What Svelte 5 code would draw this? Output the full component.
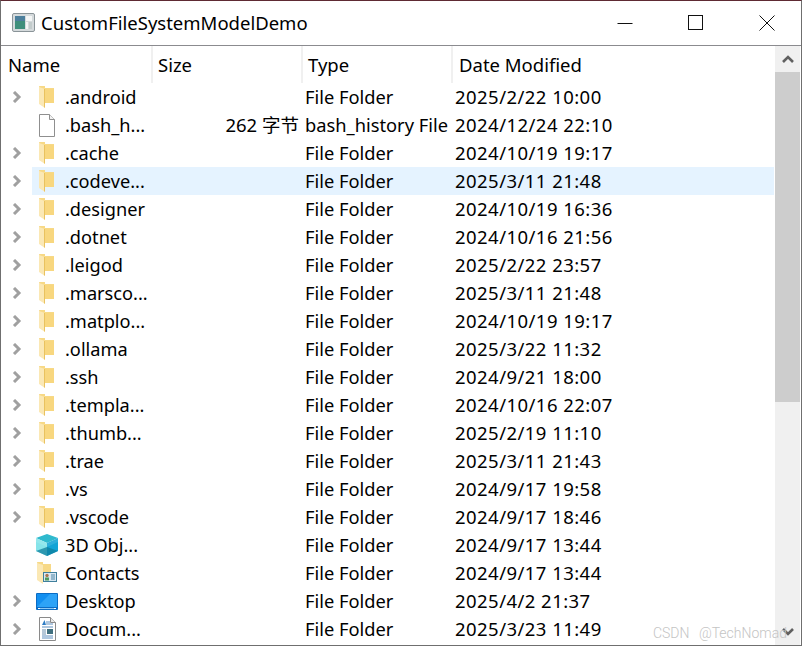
<script>
  const rows = [
    { name: '.android', type: 'File Folder', date: '2025/2/22 10:00', icon: 'folder', arrow: true },
    { name: '.bash_h...', size: '262 字节', type: 'bash_history File', date: '2024/12/24 22:10', icon: 'file', arrow: false },
    { name: '.cache', type: 'File Folder', date: '2024/10/19 19:17', icon: 'folder', arrow: true },
    { name: '.codeve...', type: 'File Folder', date: '2025/3/11 21:48', icon: 'folder', arrow: true, hover: true },
    { name: '.designer', type: 'File Folder', date: '2024/10/19 16:36', icon: 'folder', arrow: true },
    { name: '.dotnet', type: 'File Folder', date: '2024/10/16 21:56', icon: 'folder', arrow: true },
    { name: '.leigod', type: 'File Folder', date: '2025/2/22 23:57', icon: 'folder', arrow: true },
    { name: '.marsco...', type: 'File Folder', date: '2025/3/11 21:48', icon: 'folder', arrow: true },
    { name: '.matplo...', type: 'File Folder', date: '2024/10/19 19:17', icon: 'folder', arrow: true },
    { name: '.ollama', type: 'File Folder', date: '2025/3/22 11:32', icon: 'folder', arrow: true },
    { name: '.ssh', type: 'File Folder', date: '2024/9/21 18:00', icon: 'folder', arrow: true },
    { name: '.templa...', type: 'File Folder', date: '2024/10/16 22:07', icon: 'folder', arrow: true },
    { name: '.thumb...', type: 'File Folder', date: '2025/2/19 11:10', icon: 'folder', arrow: true },
    { name: '.trae', type: 'File Folder', date: '2025/3/11 21:43', icon: 'folder', arrow: true },
    { name: '.vs', type: 'File Folder', date: '2024/9/17 19:58', icon: 'folder', arrow: true },
    { name: '.vscode', type: 'File Folder', date: '2024/9/17 18:46', icon: 'folder', arrow: true },
    { name: '3D Obj...', type: 'File Folder', date: '2024/9/17 13:44', icon: 'cube', arrow: false },
    { name: 'Contacts', type: 'File Folder', date: '2024/9/17 13:44', icon: 'contacts', arrow: false },
    { name: 'Desktop', type: 'File Folder', date: '2025/4/2 21:37', icon: 'desktop', arrow: true },
    { name: 'Docum...', type: 'File Folder', date: '2025/3/23 11:49', icon: 'doc', arrow: true }
  ];
</script>

<div class="window">
  <div class="titlebar">
    <svg class="app-icon" width="23" height="19" viewBox="0 0 23 19">
      <rect x="0.5" y="0.5" width="22" height="18" rx="1.5" fill="#d5dadc" stroke="#8a9498" />
      <rect x="3" y="3" width="10" height="13" fill="#3f8f7c" />
      <rect x="3" y="3" width="10" height="5" fill="#4c7f9c" />
      <rect x="14" y="3" width="6" height="5" fill="#f4f6f6" />
      <rect x="14" y="9" width="2" height="7" fill="#f4f6f6" />
      <rect x="17" y="9" width="3" height="7" fill="#c3cccc" />
    </svg>
    <span class="title">CustomFileSystemModelDemo</span>
    <div class="controls">
      <svg width="16" height="16" viewBox="0 0 16 16"><path d="M0.5 8.5h15" stroke="#111" fill="none" /></svg>
      <svg width="16" height="16" viewBox="0 0 16 16"><rect x="0.5" y="0.5" width="14" height="14" stroke="#111" fill="none" /></svg>
      <svg width="16" height="16" viewBox="0 0 16 16"><path d="M0.5 0.5l15 15M15.5 0.5l-15 15" stroke="#111" fill="none" /></svg>
    </div>
  </div>

  <div class="body">
    <div class="tree">
      <div class="header">
        <div class="col c-name">Name</div>
        <div class="col c-size">Size</div>
        <div class="col c-type">Type</div>
        <div class="col c-date">Date Modified</div>
      </div>
      {#each rows as row}
        <div class="row">
          <div class="arrow">
            {#if row.arrow}
              <svg width="10" height="12" viewBox="0 0 10 12"><path d="M2 1l5 5-5 5" fill="none" stroke="#a0a0a0" stroke-width="3" /></svg>
            {/if}
          </div>
          <div class="cells" class:hover={row.hover}>
            <div class="icon">
              {#if row.icon === 'folder'}
                <svg class="folder" width="15" height="22" viewBox="0 0 15 22">
                  <path d="M0 0h6v2h9v15H4z" fill="#f7d987" />
                  <path d="M5 3h10v14H6z" fill="#f8d77f" />
                  <path d="M0 1l6 2v19l-6-4z" fill="#fbe8b4" />
                  <path d="M6 3v19l-1-1V3z" fill="#e9c25f" />
                </svg>
              {:else if row.icon === 'file'}
                <svg width="18" height="23" viewBox="0 0 18 23">
                  <path d="M1.5 0.5h10l5 5v17h-15z" fill="#fff" stroke="#8f8f8f" />
                  <path d="M11.5 0.5v5h5" fill="#f2f2f2" stroke="#8f8f8f" />
                </svg>
              {:else if row.icon === 'cube'}
                <svg width="22" height="22" viewBox="0 0 22 22">
                  <path d="M11 0l11 4-11 5L0 4z" fill="#2fb9cd" />
                  <path d="M0 4l11 5v13l-11-5z" fill="#86e4ea" />
                  <path d="M22 4v13l-11 5V9z" fill="#12a3d6" />
                  <path d="M0 17l11-4 11 4-11 5z" fill="#0f7f9c" opacity="0.75" />
                  <path d="M0 4l11 5 11-5v4L11 13 0 8z" fill="#ffffff" opacity="0.12" />
                </svg>
              {:else if row.icon === 'contacts'}
                <svg width="20" height="22" viewBox="0 0 20 22">
                  <path d="M0 0h6v2h8v9H6v7H4z" fill="#f7d987" />
                  <path d="M0 1l6 2v19l-6-4z" fill="#fbe8b4" />
                  <rect x="6.5" y="10.5" width="13" height="9" fill="#d9e8f2" stroke="#3f7f9c" />
                  <circle cx="10" cy="13.5" r="1.7" fill="#a9744f" />
                  <rect x="8" y="15.5" width="4" height="3" fill="#4f9a5f" />
                  <path d="M14 13h4M14 15h4M14 17h4" stroke="#4f86a6" />
                </svg>
              {:else if row.icon === 'desktop'}
                <svg width="22" height="17" viewBox="0 0 22 17">
                  <rect x="0" y="0" width="22" height="17" rx="1" fill="#0b6cc4" />
                  <rect x="1" y="1" width="20" height="13" fill="#128ff0" />
                  <path d="M1 14L14 1h7v13z" fill="#2da3f7" />
                  <path d="M2 15.5h2M18 15.5h2" stroke="#ffffff" />
                  <path d="M4 15.5h14" stroke="#8cc8f5" />
                </svg>
              {:else}
                <svg width="17" height="24" viewBox="0 0 17 24">
                  <path d="M0.5 0.5h11l5 5v18H0.5z" fill="#fff" stroke="#8a8a8a" />
                  <path d="M11.5 0.5v5h5" fill="#e8e8e8" stroke="#8a8a8a" />
                  <path d="M7 5h4M7 7h7M3 10h11M3 19h11M3 21h11" stroke="#5f8fc0" />
                  <path d="M3 8l2.5-5 1.5 5z" fill="#2d7cc4" />
                  <rect x="8" y="12" width="6" height="5" fill="#3f6f7f" />
                  <path d="M3 13h4M3 15h4M3 17h4" stroke="#6a8fb0" />
                </svg>
              {/if}
            </div>
            <div class="cell name">{row.name}</div>
            <div class="cell size">{row.size ?? ''}</div>
            <div class="cell type">{row.type}</div>
            <div class="cell date">{row.date}</div>
          </div>
        </div>
      {/each}
    </div>

    <div class="scrollbar">
      <div class="btn">
        <svg width="12" height="8" viewBox="0 0 12 8"><path d="M1 7l5-5 5 5" fill="none" stroke="#606060" stroke-width="2.6" /></svg>
      </div>
      <div class="track"><div class="thumb"></div></div>
      <div class="btn">
        <svg width="12" height="8" viewBox="0 0 12 8"><path d="M1 1l5 5 5-5" fill="none" stroke="#606060" stroke-width="2.6" /></svg>
      </div>
    </div>
  </div>
  <div class="watermark">CSDN @TechNomad</div>
</div>

<style>
  :global(body) {
    margin: 0;
    background: #fff;
  }

  .window {
    position: relative;
    width: 802px;
    height: 646px;
    box-sizing: border-box;
    display: flex;
    flex-direction: column;
    background: #fff;
    border: 1px solid #6f6f6f;
    border-top-color: #5e2a33;
    overflow: hidden;
    font-family: "Noto Sans", "Noto Sans CJK SC", sans-serif;
    font-size: 18.5px;
    color: #000;
  }

  .titlebar {
    height: 42px;
    padding-bottom: 2px;
    flex: none;
    display: flex;
    align-items: center;
    padding-left: 11px;
    border-bottom: 1px solid #8b8b8f;
  }

  .app-icon {
    margin-right: 6px;
  }

  .title {
    flex: 1;
  }

  .controls {
    display: flex;
    gap: 55px;
    margin-right: 26px;
    padding-top: 2px;
  }

  .body {
    flex: 1;
    min-height: 0;
    display: flex;
    padding-right: 1px;
  }

  .tree {
    flex: 1;
    min-width: 0;
    overflow: hidden;
    padding-right: 1px;
  }

  .header {
    display: flex;
    height: 37px;
  }

  .col {
    box-sizing: border-box;
    height: 37px;
    line-height: 37px;
    padding-left: 5px;
    border-right: 2px solid #f0f0f0;
  }

  .c-name { width: 152px; padding-left: 7px; }
  .c-size { width: 150px; }
  .c-type { width: 150px; }
  .c-date { flex: 1; padding-left: 6px; border-right: none; }

  .row {
    display: flex;
    height: 28px;
    line-height: 28px;
  }

  .arrow {
    width: 31px;
    flex: none;
    display: flex;
    align-items: center;
    justify-content: center;
  }

  .cells {
    flex: 1;
    display: flex;
  }

  .cells.hover {
    background: #e5f3ff;
  }

  .icon {
    width: 33px;
    box-sizing: border-box;
    padding-right: 3px;
    flex: none;
    display: flex;
    align-items: center;
    justify-content: center;
  }

  .folder {
    margin-right: 1px;
  }

  .cell {
    white-space: nowrap;
  }

  .name { width: 88px; font-size: 18.2px; }
  .size { width: 152px; font-size: 18.5px; text-align: right; padding-right: 6px; box-sizing: border-box; }
  .type { width: 150px; font-size: 18.3px; }
  .date { letter-spacing: 0.45px; }

  .scrollbar {
    width: 25px;
    flex: none;
    display: flex;
    flex-direction: column;
    background: #f0f0f0;
  }

  .btn {
    height: 26px;
    flex: none;
    display: flex;
    align-items: center;
    justify-content: center;
  }

  .track {
    flex: 1;
  }

  .thumb {
    height: 330px;
    background: #cdcdcd;
  }

  .watermark {
    position: absolute;
    right: 14px;
    bottom: 4px;
    font-family: Roboto, sans-serif;
    font-weight: 300;
    font-size: 14px;
    color: #c4c4c4;
    pointer-events: none;
    word-spacing: 6px;
  }
</style>
